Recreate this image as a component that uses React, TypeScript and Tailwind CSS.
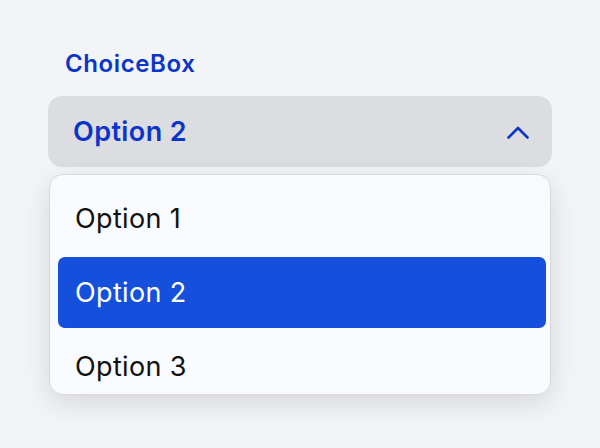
import React, { useState } from 'react';

const options = ['Option 1', 'Option 2', 'Option 3'];

export default function App() {
  const [selected, setSelected] = useState<string>('Option 2');
  const [open, setOpen] = useState<boolean>(true);

  return (
    <div
      className="w-[600px] h-[448px] bg-[#f3f4f8] px-[48px] pt-[49px]"
      style={{ fontFamily: 'Inter, "Noto Sans", sans-serif' }}
    >
      <div className="pl-[17px] text-[24px] leading-[30px] font-semibold tracking-[0.6px] text-[#0b35c9]">
        ChoiceBox
      </div>

      {/* Trigger */}
      <button
        onClick={() => setOpen(!open)}
        className="mt-[17px] w-[504px] h-[71px] rounded-[14px] bg-[#dcdde1] flex items-center justify-between pl-[25px] pr-[23px]"
      >
        <span className="pt-[2px] text-[27px] font-semibold tracking-[0.4px] text-[#0b35c9]">{selected}</span>
        <svg width="22" height="13" viewBox="0 0 22 13" fill="none" className="mt-[2px]">
          <path
            d="M1.5 11.5 L11 2 L20.5 11.5"
            stroke="#0b35c9"
            strokeWidth="2.6"
            strokeLinecap="round"
            strokeLinejoin="round"
          />
        </svg>
      </button>

      {/* Menu */}
      {open && (
        <div className="mt-[7px] ml-[1px] w-[502px] h-[221px] overflow-hidden rounded-[14px] border border-[#d9dade] bg-[#f9fafd] shadow-[0_8px_28px_rgba(0,0,0,0.12)] pl-[8px] pr-[4px] pt-[8px] flex flex-col gap-[3px]">
          {options.map((opt) => (
            <div
              key={opt}
              onClick={() => setSelected(opt)}
              className={`h-[71px] shrink-0 flex items-center pl-[17px] pt-[2px] rounded-[7px] text-[27px] tracking-[0.35px] cursor-pointer ${
                opt === selected ? 'bg-[#1450db] text-white' : 'text-[#111111]'
              }`}
            >
              {opt}
            </div>
          ))}
        </div>
      )}
    </div>
  );
}
